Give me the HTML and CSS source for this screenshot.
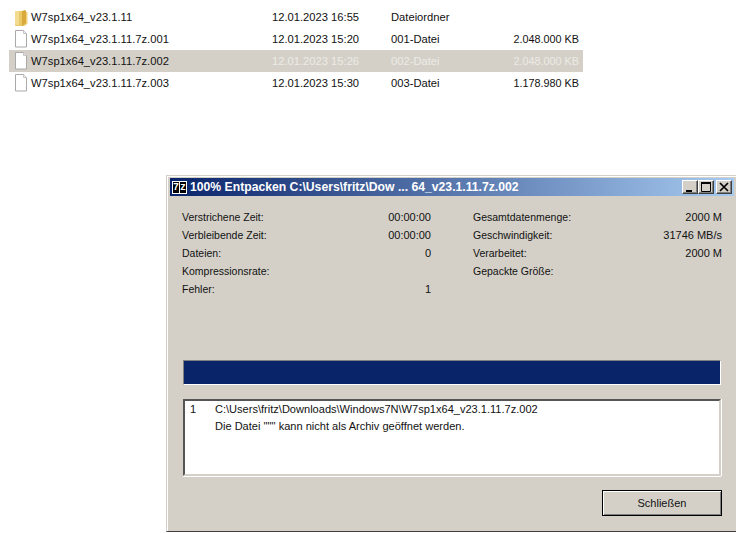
FILE: index.html
```html
<!DOCTYPE html>
<html lang="de">
<head>
<meta charset="utf-8">
<title>7-Zip</title>
<link rel="stylesheet" href="styles.css">
</head>
<body>
<div class="files">
  <div class="row">
    <svg class="ico" width="16" height="18" viewBox="0 0 16 18"><path d="M1 3h9l3 1v12l-3 2H2l-1-1z" fill="#e9c868"/><path d="M1 3h4v14H2l-1-1z" fill="#f3dc90"/><path d="M8 3l3-1 1 1v12l-4 3z" fill="#d9a93c"/><path d="M12 4h1.500v12h-1.500z" fill="#f0d27a"/></svg>
    <span class="name">W7sp1x64_v23.1.11</span><span class="date">12.01.2023 16:55</span><span class="type">Dateiordner</span><span class="size"></span>
  </div>
  <div class="row">
    <svg class="ico" width="16" height="18" viewBox="0 0 16 18"><path d="M1.500 .5h8l3 3v13.500h-11z" fill="#fff" stroke="#a9a9a9"/><path d="M9.500 .5v3h3" fill="#eee" stroke="#c4c4c4"/></svg>
    <span class="name">W7sp1x64_v23.1.11.7z.001</span><span class="date">12.01.2023 15:20</span><span class="type">001-Datei</span><span class="size">2.048.000 KB</span>
  </div>
  <div class="row sel">
    <svg class="ico" width="16" height="18" viewBox="0 0 16 18"><path d="M1.500 .5h8l3 3v13.500h-11z" fill="#fff" stroke="#a9a9a9"/><path d="M9.500 .5v3h3" fill="#eee" stroke="#c4c4c4"/></svg>
    <span class="name">W7sp1x64_v23.1.11.7z.002</span><span class="date">12.01.2023 15:26</span><span class="type">002-Datei</span><span class="size">2.048.000 KB</span>
  </div>
  <div class="row">
    <svg class="ico" width="16" height="18" viewBox="0 0 16 18"><path d="M1.500 .5h8l3 3v13.500h-11z" fill="#fff" stroke="#a9a9a9"/><path d="M9.500 .5v3h3" fill="#eee" stroke="#c4c4c4"/></svg>
    <span class="name">W7sp1x64_v23.1.11.7z.003</span><span class="date">12.01.2023 15:30</span><span class="type">003-Datei</span><span class="size">1.178.980 KB</span>
  </div>
</div>

<div class="dialog">
  <div class="title">
    <span class="logo"><span class="seven">7</span><span class="zed">z</span></span>
    <span class="title-text">100% Entpacken C:\Users\fritz\Dow ... 64_v23.1.11.7z.002</span>
    <span class="caption">
      <button class="cbtn" aria-label="Minimieren"><svg width="10" height="10" viewBox="0 0 10 10"><path d="M1 8h6v2H1z" fill="#000"/></svg></button>
      <button class="cbtn" aria-label="Maximieren"><svg width="10" height="10" viewBox="0 0 10 10"><path d="M0 0h10v2H0z" fill="#000"/><path d="M.5 1.500h9v8h-9z" fill="none" stroke="#000"/></svg></button>
      <button class="cbtn close" aria-label="Schließen"><svg width="10" height="10" viewBox="0 0 10 10"><path d="M1 1l8 8M9 1l-8 8" stroke="#000" stroke-width="1.700"/></svg></button>
    </span>
  </div>
  <div class="stats">
    <div class="stat"><span class="lbl">Verstrichene Zeit:</span><span>00:00:00</span></div>
    <div class="stat"><span class="lbl">Gesamtdatenmenge:</span><span>2000 M</span></div>
    <div class="stat"><span class="lbl">Verbleibende Zeit:</span><span>00:00:00</span></div>
    <div class="stat"><span class="lbl">Geschwindigkeit:</span><span>31746 MB/s</span></div>
    <div class="stat"><span class="lbl">Dateien:</span><span>0</span></div>
    <div class="stat"><span class="lbl">Verarbeitet:</span><span>2000 M</span></div>
    <div class="stat"><span class="lbl">Kompressionsrate:</span><span></span></div>
    <div class="stat"><span class="lbl">Gepackte Größe:</span><span></span></div>
    <div class="stat"><span class="lbl">Fehler:</span><span>1</span></div>
  </div>
  <div class="progress"></div>
  <div class="log">
    <div class="log-row"><span class="num">1</span><span>C:\Users\fritz\Downloads\Windows7N\W7sp1x64_v23.1.11.7z.002</span></div>
    <div class="log-row"><span class="num"></span><span>Die Datei '""' kann nicht als Archiv geöffnet werden.</span></div>
  </div>
  <div class="actions"><button class="close-btn">Schließen</button></div>
</div>
</body>
</html>
```
FILE: styles.css
```css
html, body { margin: 0; padding: 0; height: 533px; overflow: hidden; background: #fff; }
body { font-family: "Liberation Sans", Arial, sans-serif; font-size: 11px; color: #111; }

.files { padding: 6px 153px 0 9px; height: 175px; box-sizing: border-box; font-size: 11.2px; }
.row { display: flex; align-items: center; height: 22px; padding-left: 5px; }
.ico { flex: none; width: 16px; margin-right: 1px; }
.name { width: 241px; }
.date { width: 119px; }
.type { width: 100px; }
.size { width: 88px; text-align: right; font-size: 10.8px; }
.sel { background: #d4d0c8; }
.sel .date, .sel .type, .sel .size { color: #ecebe6; }

.dialog {
  margin-left: 166px; height: 357px; box-sizing: border-box;
  background: #d4d0c8;
  border-top: 1px solid #d4d0c8; border-left: 1px solid #d4d0c8;
  box-shadow: inset 1px 1px 0 #fff;
  border-bottom: 1px solid #404040;
  padding: 2px 2px 0 3px;
}
.title {
  display: flex; align-items: center; height: 18px; padding: 0 2px 0 2px;
  background: linear-gradient(90deg, #0a246a, #a6caf0);
  color: #fff; font-weight: bold; font-size: 12.2px;
}
.logo {
  display: inline-flex; width: 15px; height: 13px; margin-right: 3px; flex: none;
  background: #000; border: 1px solid #fff; box-sizing: border-box;
  font: bold 10px/11px "Liberation Mono", monospace; justify-content: center; overflow: hidden;
}
.seven { background: #000; color: #fff; border-right: 1px solid #fff; width: 6px; text-align: center; }
.zed { color: #fff; width: 6px; text-align: center; }
.title-text { flex: 1; white-space: nowrap; }
.caption { display: flex; flex: none; }
.cbtn {
  width: 16px; height: 14px; padding: 0; margin: 0; display: flex; align-items: center; justify-content: center;
  background: #d4d0c8; border: 1px solid; border-color: #fff #404040 #404040 #fff;
  box-shadow: inset -1px -1px 0 #808080;
}
.close { margin-left: 2px; }

.stats {
  display: grid; grid-template-columns: 249px 249px; column-gap: 42px;
  grid-auto-rows: 18px; padding: 12px 0 0 12px; height: 90px;
}
.stat { display: flex; justify-content: space-between; align-items: center; }
.lbl { font-size: 10.5px; }

.progress {
  margin: 62px 13px 0 13px; height: 25px; box-sizing: border-box;
  background: #0a246a; border: 1px solid; border-color: #808080 #fff #fff #808080;
}
.log {
  margin: 14px 13px 0 13px; height: 77px; box-sizing: border-box; padding: 1px 0 0 5px;
  background: #fff; border: 2px solid; border-color: #555 #d4d0c8 #d4d0c8 #555;
  box-shadow: 0 1px 0 #fff, 1px 0 0 #fff;
}
.log-row { display: flex; height: 17px; align-items: flex-start; line-height: 14px; font-size: 11.05px; }
.num { width: 25px; flex: none; }

.actions { display: flex; justify-content: flex-end; padding: 14px 12px 0 0; }
.close-btn {
  width: 120px; height: 26px; padding: 0; background: #d4d0c8; color: #111;
  font: 11px "Liberation Sans", sans-serif;
  border: 1px solid #000; box-shadow: inset 1px 1px 0 #fff, inset -1px -1px 0 #808080;
}
```
